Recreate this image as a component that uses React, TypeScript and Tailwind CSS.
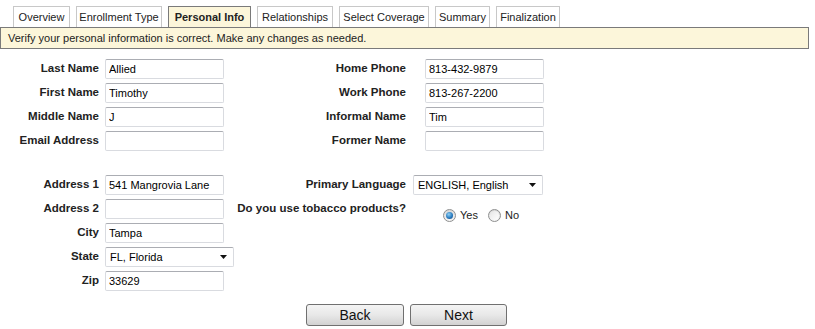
import React from "react";

const FONT = { fontFamily: '"Liberation Sans", Arial, sans-serif' };

function TextBox({ value }: { value: string }) {
  return (
    <input
      readOnly
      value={value}
      className="block w-[119px] h-[20px] border border-[#d9dbe0] border-t-[#abadb3] rounded-[2px] bg-white px-[3px] text-[11px] text-black outline-none"
    />
  );
}

function SelectBox({ value, w }: { value: string; w: string }) {
  return (
    <div
      className={`${w} h-[20px] border border-[#d9dbe0] border-t-[#abadb3] rounded-[2px] bg-white pl-[4px] pr-[6px] text-[11px] text-black flex items-center justify-between`}
    >
      <span>{value}</span>
      <svg width="7" height="4" viewBox="0 0 7 4">
        <path d="M0 0H7L3.5 4Z" fill="#111" />
      </svg>
    </div>
  );
}

function Radio({ checked }: { checked: boolean }) {
  return (
    <div className="w-[13px] h-[13px] rounded-full border border-[#8e8f8f] bg-gradient-to-b from-[#d8d8d8] to-[#f6f6f6] flex items-center justify-center">
      {checked ? (
        <div className="w-[7px] h-[7px] rounded-full bg-[radial-gradient(circle_at_40%_35%,#8fd0f4,#2a7cc0_55%,#0f3f78)]" />
      ) : (
        <div className="w-[9px] h-[9px] rounded-full bg-gradient-to-br from-[#e6e6e6] to-[#ffffff]" />
      )}
    </div>
  );
}

function LeftLabel({ children }: { children: React.ReactNode }) {
  return (
    <div className="w-[99px] h-[20px] flex items-center justify-end font-bold text-[11.5px] text-[#222] whitespace-nowrap">
      {children}
    </div>
  );
}

function RightLabel({ children }: { children: React.ReactNode }) {
  return (
    <div className="w-[165px] h-[20px] flex items-center justify-end font-bold text-[11.5px] text-[#222] whitespace-nowrap">
      {children}
    </div>
  );
}

const tabs = [
  { name: "Overview", w: "w-[57px]" },
  { name: "Enrollment Type", w: "w-[86px]" },
  { name: "Personal Info", w: "w-[83px]", active: true },
  { name: "Relationships", w: "w-[76px]" },
  { name: "Select Coverage", w: "w-[90px]" },
  { name: "Summary", w: "w-[55px]" },
  { name: "Finalization", w: "w-[64px]" },
];

export default function App() {
  return (
    <div className="w-[815px] h-[329px] bg-white overflow-hidden text-[#222]" style={FONT}>
      {/* Tabs */}
      <div className="flex gap-[6px] pl-[13px] pt-[6px]">
        {tabs.map((t) =>
          t.active ? (
            <div
              key={t.name}
              className={`${t.w} h-[21px] border border-b-0 border-[#7a7a7a] bg-[#fcf6da] flex items-center justify-center text-[11px] font-bold text-[#222] whitespace-nowrap`}
            >
              {t.name}
            </div>
          ) : (
            <div
              key={t.name}
              className={`${t.w} h-[21px] border border-b-0 border-[#c8c8c8] bg-white flex items-center justify-center text-[11px] text-[#222] whitespace-nowrap`}
            >
              {t.name}
            </div>
          )
        )}
      </div>

      {/* Banner */}
      <div className="w-[809px] h-[22px] border border-[#7a7a7a] bg-[#fcf6da] pl-[7px] flex items-center text-[11px] text-[#222]">
        Verify your personal information is correct. Make any changes as needed.
      </div>

      {/* Form */}
      <div className="mt-[10px] flex flex-col">
        {[
          ["Last Name", "Allied", "Home Phone", "813-432-9879"],
          ["First Name", "Timothy", "Work Phone", "813-267-2200"],
          ["Middle Name", "J", "Informal Name", "Tim"],
          ["Email Address", "", "Former Name", ""],
        ].map(([l, lv, r, rv]) => (
          <div key={l} className="h-[24px] flex items-start">
            <LeftLabel>{l}</LeftLabel>
            <div className="w-[136px] ml-[6px]">
              <TextBox value={lv} />
            </div>
            <RightLabel>{r}</RightLabel>
            <div className="ml-[19px]">
              <TextBox value={rv} />
            </div>
          </div>
        ))}

        <div className="h-[20px]" />

        <div className="h-[24px] flex items-start">
          <LeftLabel>Address 1</LeftLabel>
          <div className="w-[136px] ml-[6px]">
            <TextBox value="541 Mangrovia Lane" />
          </div>
          <RightLabel>Primary Language</RightLabel>
          <div className="ml-[7px]">
            <SelectBox value="ENGLISH, English" w="w-[130px]" />
          </div>
        </div>

        <div className="h-[24px] flex items-start">
          <LeftLabel>Address 2</LeftLabel>
          <div className="w-[136px] ml-[6px]">
            <TextBox value="" />
          </div>
          <RightLabel>Do you use tobacco products?</RightLabel>
          <div className="ml-[37px] mt-[8px] flex items-center text-[11px] text-[#222]">
            <Radio checked />
            <span className="ml-[4px]">Yes</span>
            <div className="ml-[10px]">
              <Radio checked={false} />
            </div>
            <span className="ml-[4px]">No</span>
          </div>
        </div>

        <div className="h-[24px] flex items-start">
          <LeftLabel>City</LeftLabel>
          <div className="w-[136px] ml-[6px]">
            <TextBox value="Tampa" />
          </div>
        </div>

        <div className="h-[24px] flex items-start">
          <LeftLabel>State</LeftLabel>
          <div className="w-[136px] ml-[6px]">
            <SelectBox value="FL, Florida" w="w-[129px]" />
          </div>
        </div>

        <div className="h-[24px] flex items-start">
          <LeftLabel>Zip</LeftLabel>
          <div className="w-[136px] ml-[6px]">
            <TextBox value="33629" />
          </div>
        </div>
      </div>

      {/* Buttons */}
      <div className="mt-[9px] flex gap-[6px] pl-[306px]">
        <button className="w-[98px] h-[22px] border border-[#707070] rounded-[3px] bg-gradient-to-b from-[#f4f4f4] via-[#e8e8e8] to-[#d2d2d2] text-[14px] text-[#111] flex items-center justify-center">
          Back
        </button>
        <button className="w-[97px] h-[22px] border border-[#707070] rounded-[3px] bg-gradient-to-b from-[#f4f4f4] via-[#e8e8e8] to-[#d2d2d2] text-[14px] text-[#111] flex items-center justify-center">
          Next
        </button>
      </div>
    </div>
  );
}
